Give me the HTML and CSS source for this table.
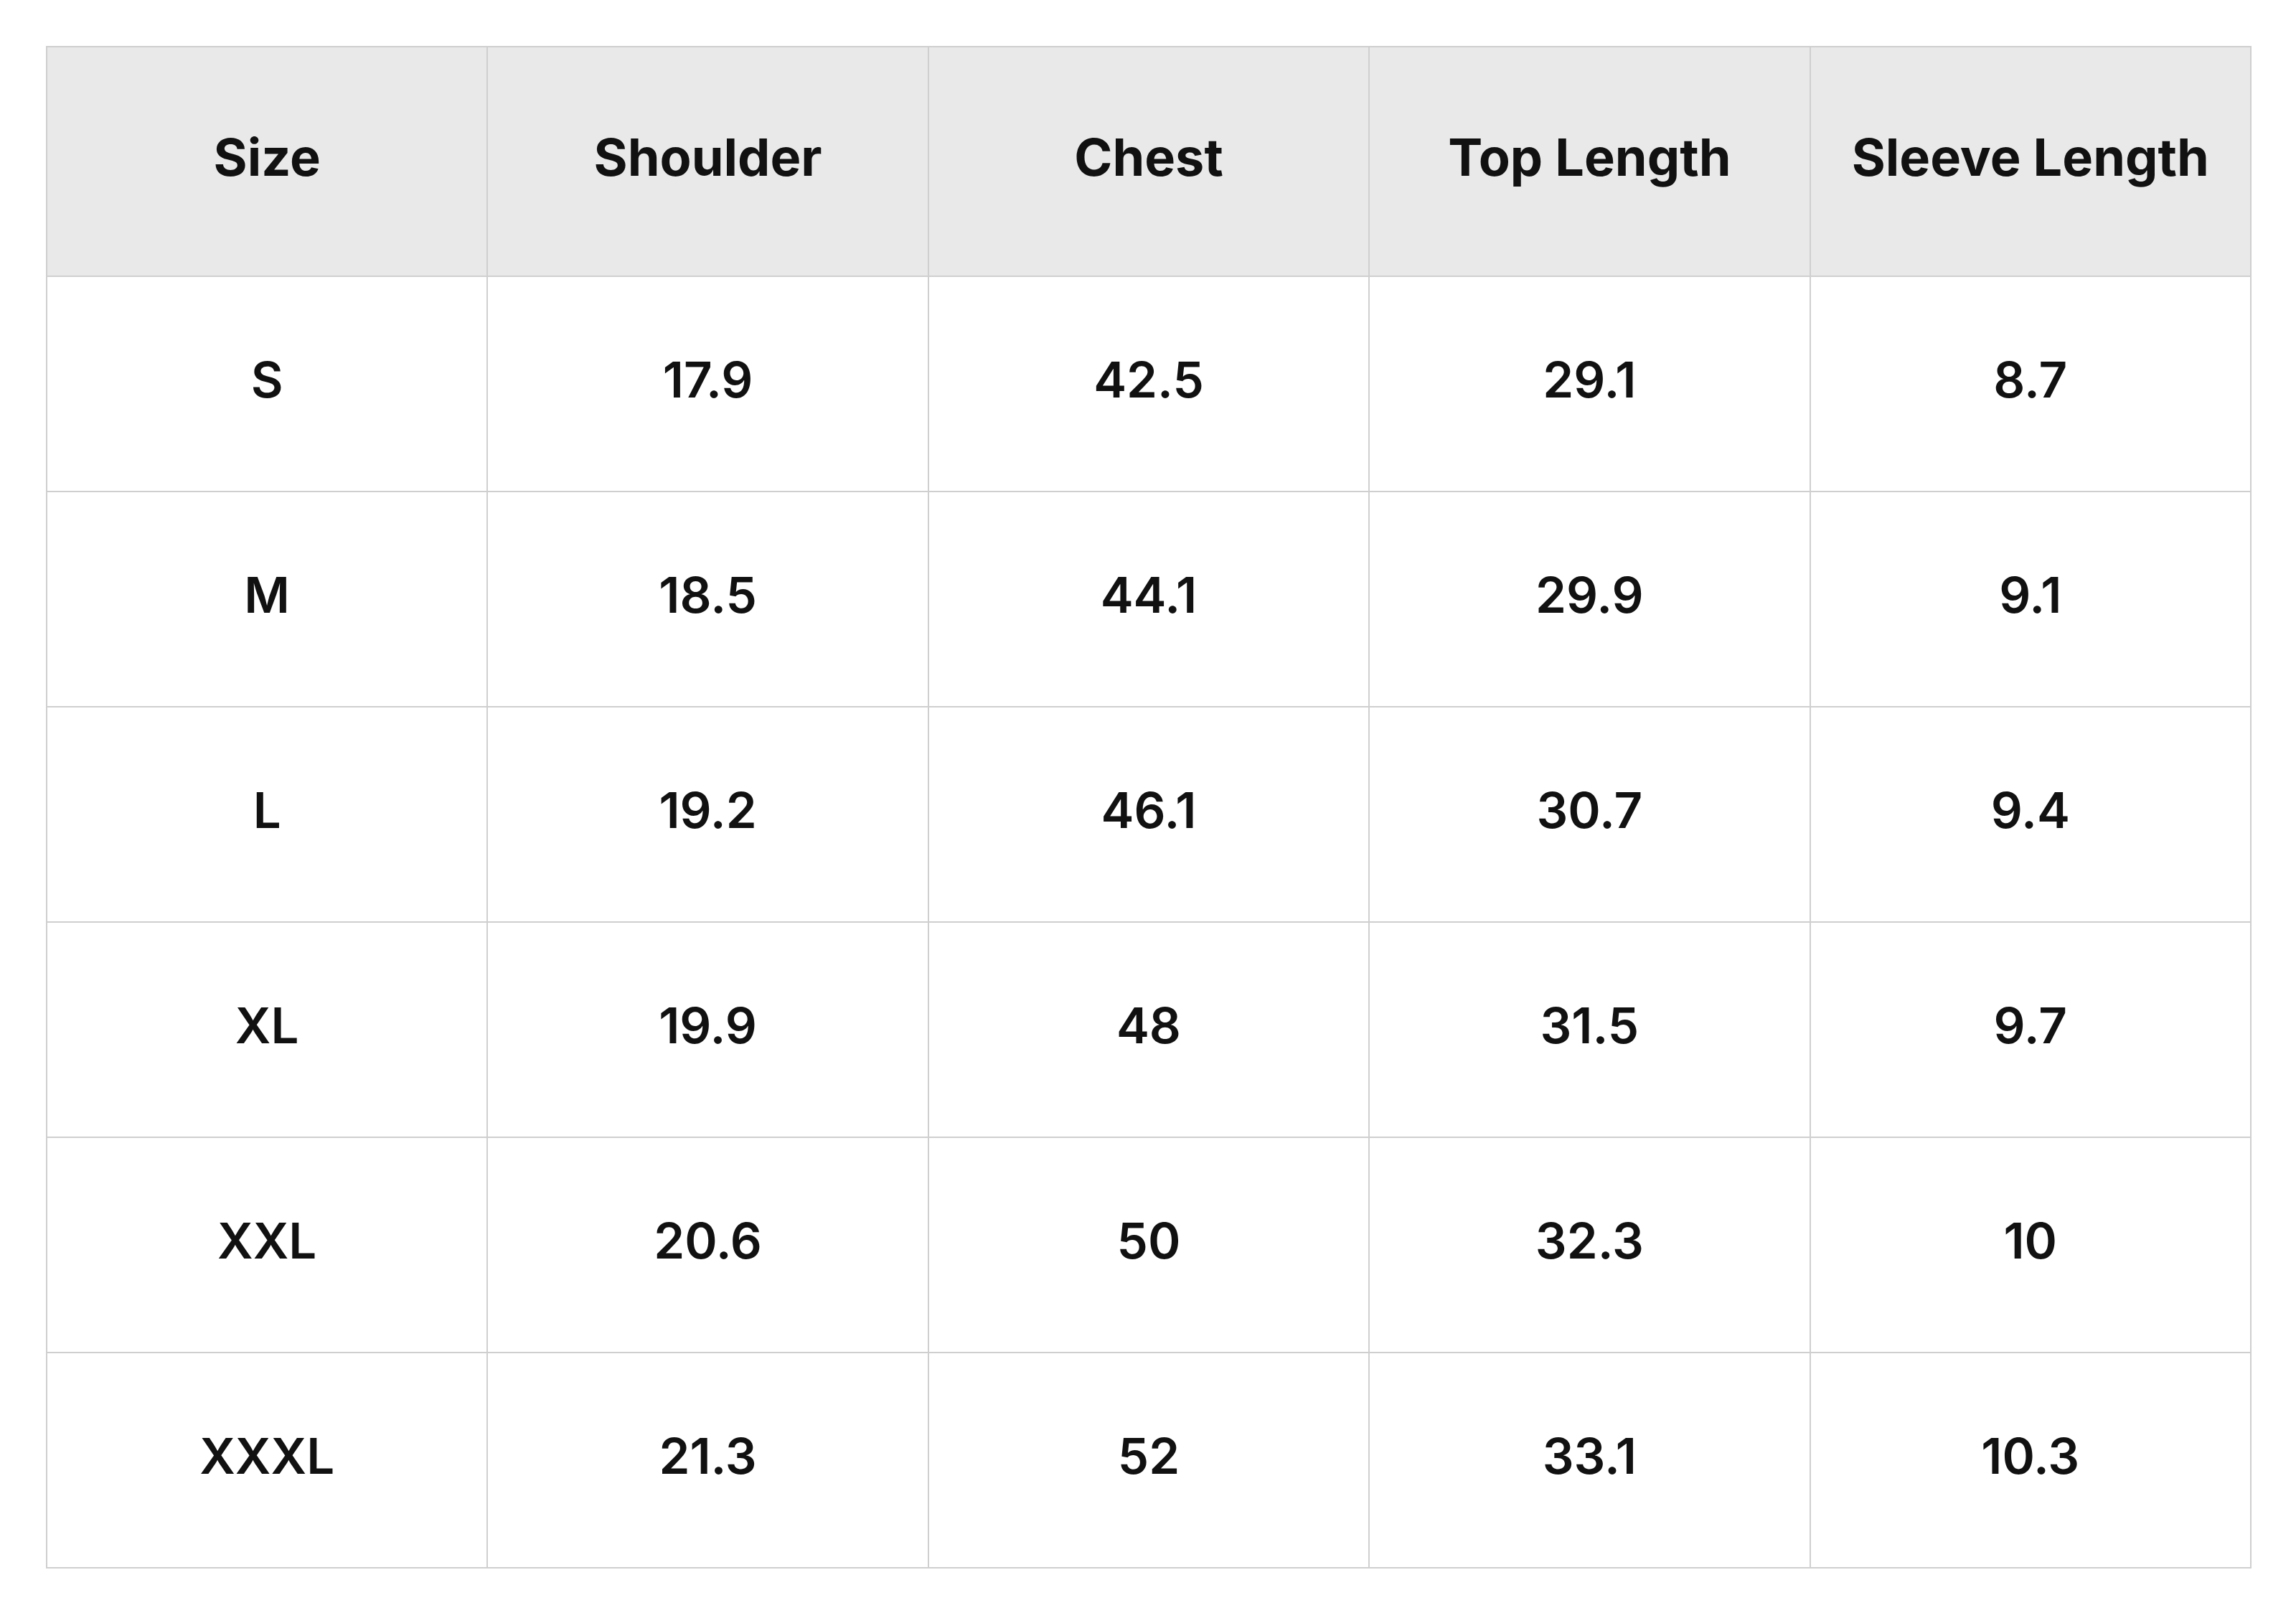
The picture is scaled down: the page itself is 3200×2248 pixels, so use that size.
FILE: index.html
```html
<!DOCTYPE html>
<html lang="en">
<head>
<meta charset="utf-8">
<title>Size Chart</title>
<link rel="stylesheet" href="styles.css">
</head>
<body>
<table class="size-table">
  <thead>
    <tr>
      <th>Size</th>
      <th>Shoulder</th>
      <th>Chest</th>
      <th>Top Length</th>
      <th>Sleeve Length</th>
    </tr>
  </thead>
  <tbody>
    <tr><td>S</td><td>17.9</td><td>42.5</td><td>29.1</td><td>8.7</td></tr>
    <tr><td>M</td><td>18.5</td><td>44.1</td><td>29.9</td><td>9.1</td></tr>
    <tr><td>L</td><td>19.2</td><td>46.1</td><td>30.7</td><td>9.4</td></tr>
    <tr><td>XL</td><td>19.9</td><td>48</td><td>31.5</td><td>9.7</td></tr>
    <tr><td>XXL</td><td>20.6</td><td>50</td><td>32.3</td><td>10</td></tr>
    <tr><td>XXXL</td><td>21.3</td><td>52</td><td>33.1</td><td>10.3</td></tr>
  </tbody>
</table>
</body>
</html>
```

FILE: styles.css
```css
html, body {
  margin: 0;
  padding: 0;
  background: #ffffff;
}

body {
  padding: 64px;
  font-family: Inter, "Liberation Sans", sans-serif;
  color: #111111;
}

.size-table {
  width: 3074px;
  border-collapse: collapse;
  table-layout: fixed;
}

.size-table th,
.size-table td {
  border: 2px solid #cfcfcf;
  text-align: center;
  vertical-align: middle;
  padding: 0 0 12px 0;
  line-height: 1;
}

.size-table th {
  background: #e9e9e9;
  height: 306px;
  font-size: 72px;
  font-weight: 700;
}

.size-table td {
  height: 286px;
  font-size: 69px;
  font-weight: 600;
}
```
